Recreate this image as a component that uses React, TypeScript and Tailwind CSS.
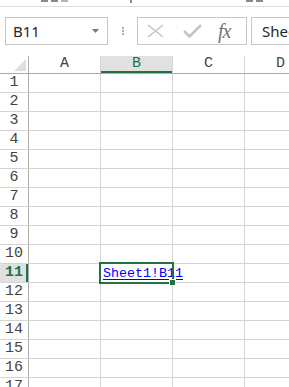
import React from 'react';

const GREEN = '#217346';
const cols = ['A', 'B', 'C', 'D'];
const rows = Array.from({ length: 17 }, (_, i) => i + 1);

const RibbonBits: React.FC = () => (
  <div className="relative h-[17px]">
    <div className="flex items-start h-[3px]">
      <div className="ml-[41px] flex gap-[3px]">
        <span className="w-[7px] h-[2px] bg-[#8a8a8a]" />
        <span className="w-[7px] h-[2px] bg-[#8a8a8a]" />
        <span className="w-[7px] h-[2px] bg-[#b5b5b5]" />
      </div>
      <span className="ml-[62px] w-[2px] h-[3px] bg-[#8a8a8a]" />
      <div className="ml-[114px] flex gap-[3px]">
        <span className="w-[7px] h-[2px] bg-[#8a8a8a]" />
        <span className="w-[7px] h-[2px] bg-[#8a8a8a]" />
      </div>
    </div>
    <div className="mt-[3px] h-px bg-[#dedede]" />
  </div>
);

const FormulaBar: React.FC = () => (
  <div className="flex h-[28px] font-['Noto_Sans',sans-serif]">
    <div className="ml-[5px] w-[103px] shrink-0 border border-[#c6c6c6] flex items-center justify-between pl-[7px] pr-[8px]">
      <span className="text-[15px] text-[#262626] leading-none">B11</span>
      <svg width="7" height="4" viewBox="0 0 7 4">
        <path d="M0 0h7L3.5 4z" fill="#7a7a7a" />
      </svg>
    </div>
    <div className="w-[29px] shrink-0 flex flex-col items-center justify-center gap-[1px]">
      <span className="w-[2px] h-[2px] bg-[#b0b0b0]" />
      <span className="w-[2px] h-[2px] bg-[#b0b0b0]" />
      <span className="w-[2px] h-[2px] bg-[#b0b0b0]" />
    </div>
    <div className="w-[110px] shrink-0 border border-[#c6c6c6] flex items-center pl-[9px]">
      <svg width="17" height="14" viewBox="0 0 17 14">
        <path d="M1 1l15 12M16 1L1 13" stroke="#c4c4c4" strokeWidth="1.6" fill="none" />
      </svg>
      <svg className="ml-[19px]" width="19" height="14" viewBox="0 0 19 14">
        <path d="M1 7l5.5 5.5L18 1" stroke="#c4c4c4" strokeWidth="2.6" fill="none" />
      </svg>
      <span className="ml-[16px] font-['Liberation_Serif',serif] italic text-[20px] leading-none text-[#767676] tracking-[-1px]">
        fx
      </span>
    </div>
    <div className="ml-[4px] w-[120px] shrink-0 border border-r-0 border-[#c6c6c6] flex items-center pl-[10px] overflow-hidden">
      <span className="text-[15px] text-[#262626] leading-none whitespace-nowrap">Sheet1!B11</span>
    </div>
  </div>
);

const App: React.FC = () => {
  return (
    <div className="w-[289px] h-[387px] overflow-hidden bg-white relative">
      <RibbonBits />
      <FormulaBar />
      <div className="h-[11px]" />

      <div className="font-['Liberation_Mono',monospace] text-[#444]">
        {/* column headers */}
        <div className="flex h-[18px] border-b border-[#ababab]">
          <div className="w-[29px] shrink-0 border-r border-[#ababab] flex items-end justify-end pr-[2px] pb-[2px]">
            <svg width="12" height="12" viewBox="0 0 12 12">
              <path d="M12 0v12H0z" fill="#dfdfdf" />
            </svg>
          </div>
          {cols.map((c) => (
            <div
              key={c}
              className={
                c === 'B'
                  ? 'w-[72px] shrink-0 border-r border-[#d4d4d4] bg-[#e1e1e1] shadow-[inset_0_-2px_0_#217346] flex items-center justify-center text-[15px] text-[#217346]'
                  : 'w-[72px] shrink-0 border-r border-[#d4d4d4] flex items-center justify-center text-[15px]'
              }
            >
              {c}
            </div>
          ))}
        </div>

        {/* rows */}
        {rows.map((r) => (
          <div key={r} className="flex h-[19px] border-b border-[#d4d4d4]">
            <div
              className={
                r === 11
                  ? 'w-[29px] shrink-0 border-r border-[#ababab] bg-[#e1e1e1] shadow-[inset_-2px_0_0_#217346] flex items-center justify-center text-[15px] text-[#217346] font-bold'
                  : 'w-[29px] shrink-0 border-r border-[#ababab] flex items-center justify-center text-[15px]'
              }
            >
              {r}
            </div>
            {cols.map((c) => (
              <div key={c} className="w-[72px] shrink-0 border-r border-[#d4d4d4] relative">
                {r === 11 && c === 'B' && (
                  <span className="absolute left-[2px] bottom-[1px] whitespace-nowrap text-[13.33px] leading-[15px] text-[#0000ff] underline underline-offset-[2px]">
                    Sheet1!B11
                  </span>
                )}
              </div>
            ))}
          </div>
        ))}
      </div>

      {/* selection box + fill handle */}
      <div className="absolute left-[99px] top-[262px] w-[75px] h-[22px] border-2" style={{ borderColor: GREEN }} />
      <div className="absolute left-[169px] top-[279px] w-[7px] h-[7px] bg-[#217346] border border-white" />
    </div>
  );
};

export default App;
